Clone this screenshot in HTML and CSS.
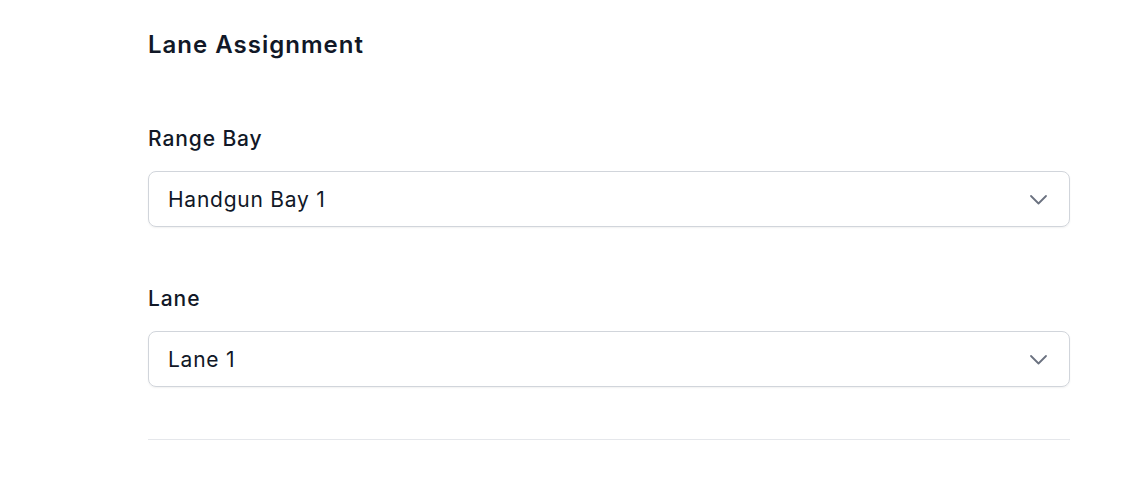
FILE: index.html
```html
<!DOCTYPE html>
<html>
<head>
    <title>Lane Assignment</title>
    <meta charset="utf-8">
    <meta name="viewport" content="width=device-width, initial-scale=1">
    <link rel="stylesheet" href="styles.css">
</head>
<body>
    <div class="container">
        <h2 class="section-title">Lane Assignment</h2>

        <div class="field">
            <label class="field-label">Range Bay</label>
            <div class="select">
                <span>Handgun Bay 1</span>
                <svg class="chevron" width="20" height="20" viewBox="0 0 20 20" fill="none">
                    <path d="M3 7l7.5 7.5L18 7" stroke="#6b7280" stroke-width="1.8" stroke-linecap="round" stroke-linejoin="round"/>
                </svg>
            </div>
        </div>

        <div class="field">
            <label class="field-label">Lane</label>
            <div class="select">
                <span>Lane 1</span>
                <svg class="chevron" width="20" height="20" viewBox="0 0 20 20" fill="none">
                    <path d="M3 7l7.5 7.5L18 7" stroke="#6b7280" stroke-width="1.8" stroke-linecap="round" stroke-linejoin="round"/>
                </svg>
            </div>
        </div>

        <hr class="divider">
    </div>
</body>
</html>
```

FILE: styles.css
```css
body {
    font-family: Inter, "Noto Sans", sans-serif;
    margin: 0;
    background: #ffffff;
    color: #111827;
}
.container {
    width: 922px;
    padding: 29px 0 0 148px;
}
.section-title {
    margin: 0 0 64px;
    font-size: 24px;
    line-height: 32px;
    font-weight: 600;
    letter-spacing: 1px;
    color: #111827;
}
.field {
    margin-bottom: 58px;
}
.field-label {
    display: block;
    font-size: 21px;
    line-height: 28px;
    font-weight: 500;
    letter-spacing: 0.9px;
    margin-bottom: 18px;
    color: #111827;
}
.select {
    display: flex;
    align-items: center;
    justify-content: space-between;
    box-sizing: border-box;
    height: 56px;
    padding: 0 21px 0 19px;
    border: 1px solid #d1d5db;
    border-radius: 8px;
    box-shadow: 0 1px 2px rgba(0,0,0,0.06);
    font-size: 21px;
    letter-spacing: 0.75px;
    color: #111827;
}
.chevron {
    flex-shrink: 0;
}
.divider {
    border: none;
    border-top: 1px solid #e5e7eb;
    margin: -6px 0 0;
}
```
